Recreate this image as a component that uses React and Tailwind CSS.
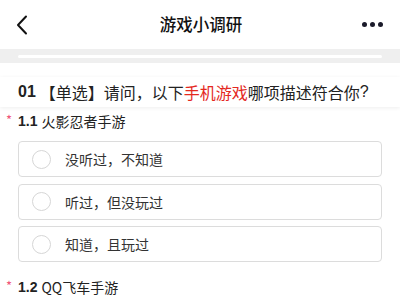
import React from "react";

const font = { fontFamily: '"Noto Sans CJK SC", "Liberation Sans", sans-serif' };

function Option({ label }) {
  return (
    <div className="h-[36px] mx-[18px] border border-[#dcdcdc] rounded-[4px] flex items-center bg-white">
      <div className="ml-[13px] w-[19px] h-[19px] rounded-full border border-[#d6d6d6]"></div>
      <span className="ml-[14px] text-[14px] text-[#333] leading-none">{label}</span>
    </div>
  );
}

function SubTitle({ num, text }) {
  return (
    <div className="flex items-center h-[20px]">
      <span className="w-[18px] pl-[6px] text-[#f0567a] text-[13px] leading-none self-start pt-[2px]">*</span>
      <span className="font-bold text-[14px] text-[#222] leading-none" style={{ fontFamily: '"Liberation Sans", sans-serif' }}>{num}</span>
      <span className="ml-[4px] text-[14px] text-[#222] leading-none">{text}</span>
    </div>
  );
}

export default function App() {
  return (
    <div className="w-[400px] h-[306px] bg-white overflow-hidden" style={font}>
      <div className="h-[49px] flex items-center justify-between px-[15px]">
        <svg width="12" height="20" viewBox="0 0 12 20" fill="none" className="ml-[1px]">
          <path d="M10 1.5 L2 10 L10 18.5" stroke="#111" strokeWidth="2" strokeLinecap="round" strokeLinejoin="round" />
        </svg>
        <span className="text-[16.5px] font-medium text-[#111] leading-none ml-[12px]">游戏小调研</span>
        <div className="flex items-center gap-[3px] mr-[2px]">
          <span className="w-[5px] h-[5px] rounded-full bg-[#1a1a2a]"></span>
          <span className="w-[5px] h-[5px] rounded-full bg-[#1a1a2a]"></span>
          <span className="w-[5px] h-[5px] rounded-full bg-[#1a1a2a]"></span>
        </div>
      </div>
      <div className="h-[14px] bg-[#efefef] px-[18px] flex items-center">
        <div className="h-[3px] w-full rounded-full bg-white"></div>
      </div>
      <div className="h-[14px]"></div>
      <div className="h-[30px] flex items-center px-[18px] shadow-[0_1px_4px_rgba(0,0,0,0.07)] text-[16px] text-[#222] leading-none">
        <span className="font-bold" style={{ fontFamily: '"Liberation Sans", sans-serif' }}>01</span>
        <span className="ml-[4px]">【单选】请问，以下</span>
        <span className="text-[#e4281e]">手机游戏</span>
        <span>哪项描述符合你</span>
        <span style={{ fontFamily: '"Liberation Sans", sans-serif' }}>?</span>
      </div>
      <div className="mt-[4px]">
        <SubTitle num="1.1" text="火影忍者手游" />
      </div>
      <div className="mt-[10px] flex flex-col gap-[6.5px]">
        <Option label="没听过，不知道" />
        <Option label="听过，但没玩过" />
        <Option label="知道，且玩过" />
      </div>
      <div className="mt-[15px]">
        <SubTitle num="1.2" text="QQ飞车手游" />
      </div>
    </div>
  );
}
